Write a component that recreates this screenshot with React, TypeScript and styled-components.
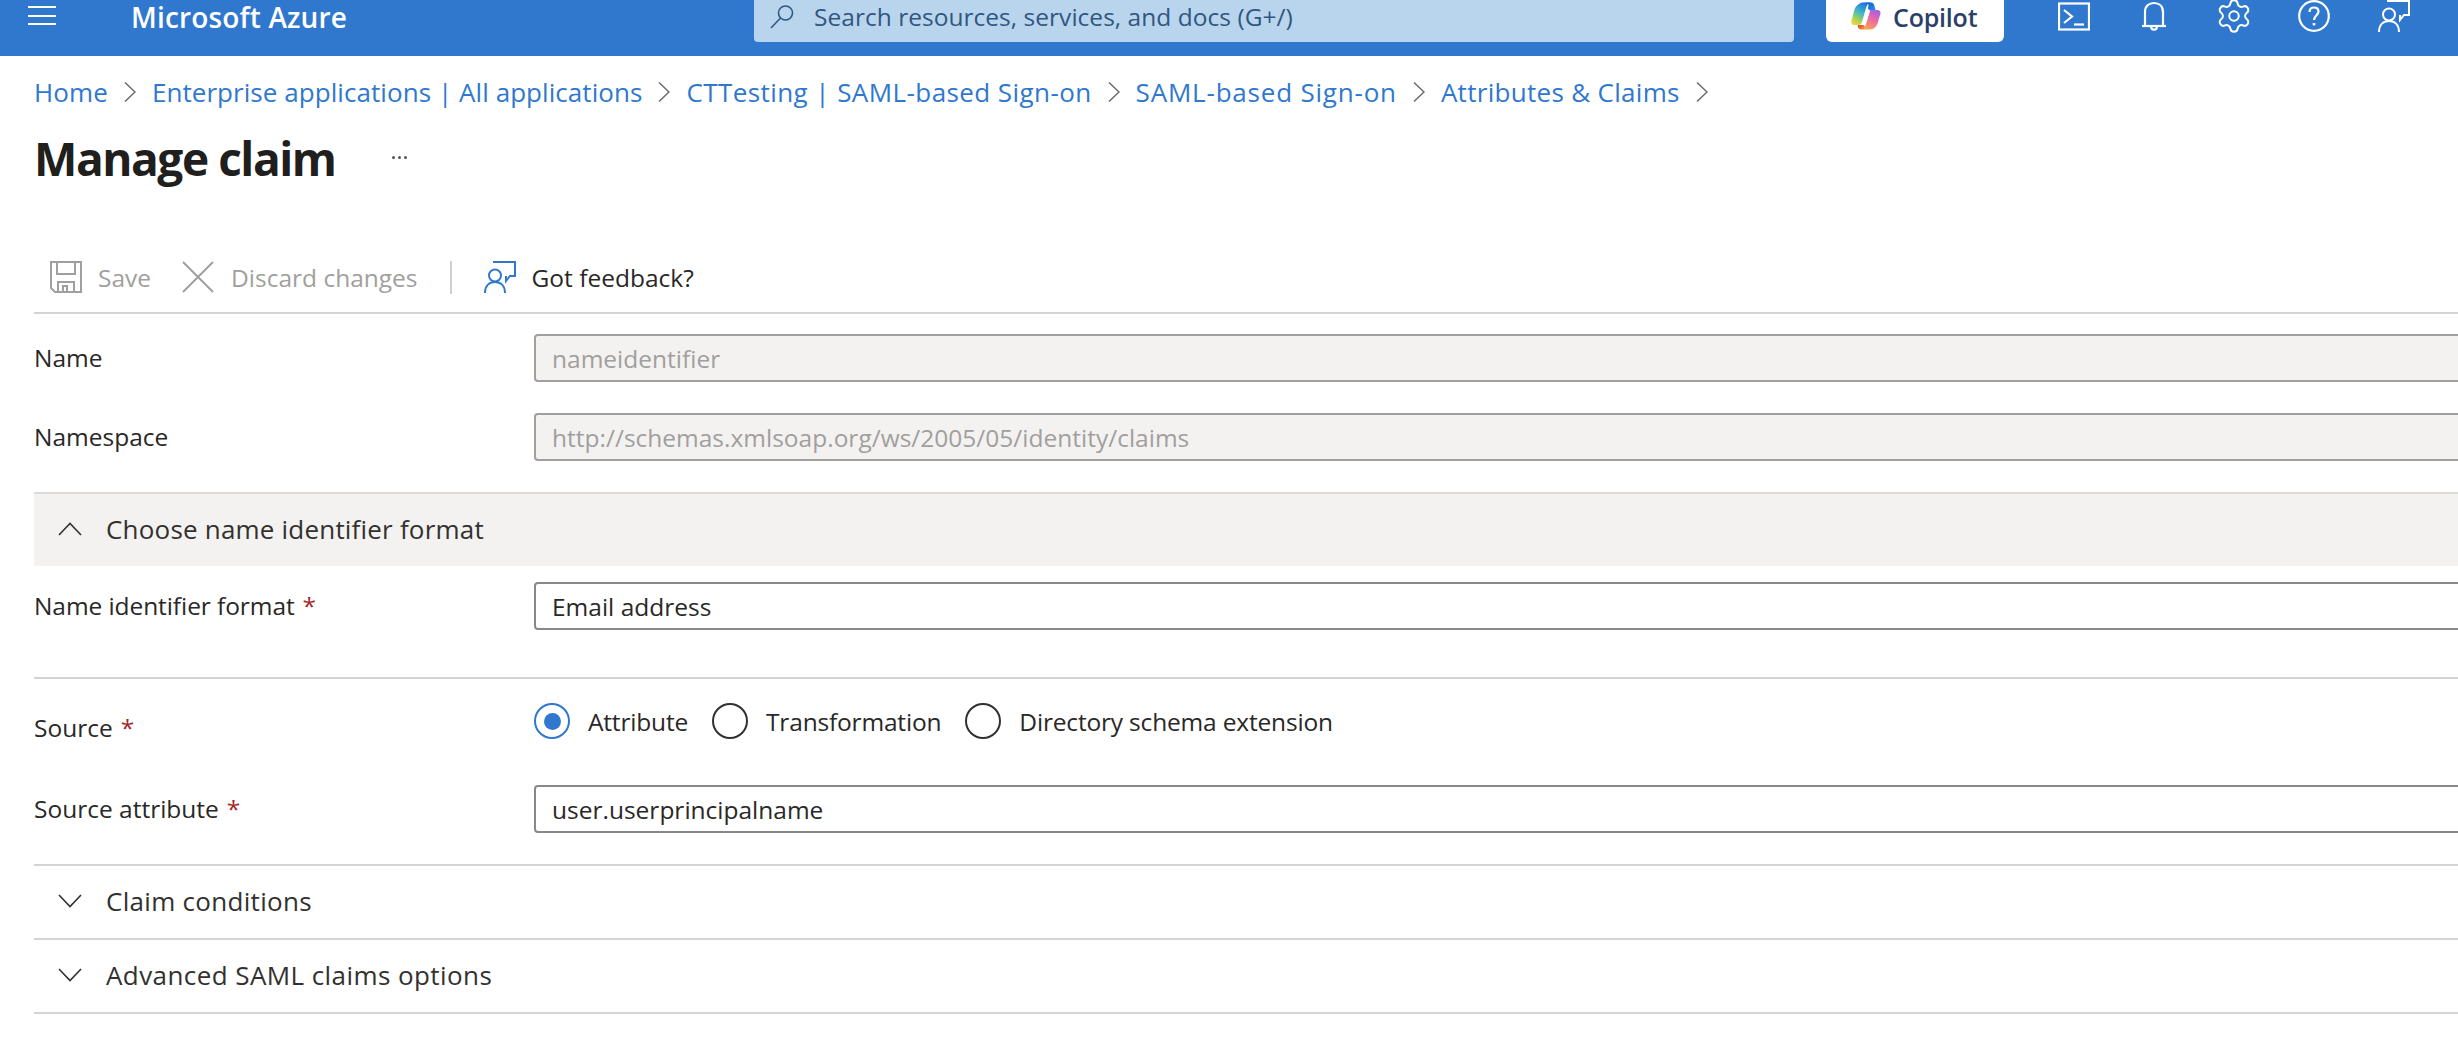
import React from 'react';
import styled, { createGlobalStyle } from 'styled-components';
import { Settings } from 'lucide-react';

const Global = createGlobalStyle`
  html, body { margin: 0; padding: 0; background: #fff; }
  body { font-family: "Open Sans", "Noto Sans", sans-serif; color: #292827; }
  * { box-sizing: border-box; }
`;

const Page = styled.div`
  width: 2458px;
  height: 1040px;
  overflow: hidden;
  background: #fff;
`;

const TopBar = styled.header`
  height: 56px;
  background: #2f78ce;
  display: flex;
  align-items: flex-start;
  color: #fff;
`;

const Burger = styled.div`
  width: 28px;
  margin: 6px 0 0 28px;
  display: flex;
  flex-direction: column;
  gap: 6.5px;
  span { display: block; height: 2px; background: #fff; }
`;

const Brand = styled.div`
  width: 623px;
  margin-left: 75px;
  font-size: 28px;
  line-height: 34px;
  font-weight: 600;
  letter-spacing: 0.15px;
`;

const SearchBox = styled.div`
  width: 1040px;
  height: 42px;
  background: #b9d5ee;
  border-radius: 0 0 4px 4px;
  display: flex;
  align-items: flex-start;
  padding-left: 16px;
  svg { margin-top: 5px; flex: none; }
  span {
    margin-left: 20px;
    color: #31577f;
    font-size: 24.5px;
    line-height: 33px;
    letter-spacing: 0.03px;
  }
`;

const CopilotButton = styled.div`
  width: 178px;
  height: 42px;
  margin-left: 32px;
  background: #fff;
  border-radius: 0 0 6px 6px;
  display: flex;
  align-items: flex-start;
  padding: 2px 0 0 25px;
  gap: 12px;
  span {
    color: #2b3f6b;
    font-size: 25px;
    line-height: 30px;
    font-weight: 600;
    letter-spacing: -0.2px;
  }
`;

const TopIcons = styled.div`
  display: flex;
  margin-left: 30px;
`;

const TopIcon = styled.div`
  width: 80px;
  height: 32px;
  display: flex;
  justify-content: center;
`;

const GearIcon = styled(Settings)`
  margin-top: -3px;
  flex: none;
`;

const Main = styled.main`
  padding-left: 34px;
`;

const Crumbs = styled.nav`
  height: 40px;
  margin-top: 16px;
  display: flex;
  align-items: center;
  gap: 16px;
  font-size: 26px;
  color: #2f78ce;
`;

const CrumbLink = styled.span<{ $track?: number }>`
  white-space: nowrap;
  letter-spacing: ${p => p.$track ?? 0}px;
`;

const TitleRow = styled.div`
  height: 95px;
  padding-bottom: 4px;
  display: flex;
  align-items: center;
`;

const Title = styled.h1`
  margin: 0;
  font-size: 46px;
  font-weight: 700;
  letter-spacing: -1.45px;
  color: #201f1e;
`;

const More = styled.div`
  margin-left: 56px;
  display: flex;
  gap: 3px;
  span { width: 3px; height: 3px; border-radius: 50%; background: #555; }
`;

const Toolbar = styled.div`
  height: 70px;
  margin-top: 37px;
  padding: 0 0 2px 16px;
  border-bottom: 2px solid #d6d4d2;
  display: flex;
  align-items: center;
`;

const ToolButton = styled.div<{ $disabled?: boolean; $gap: number }>`
  display: flex;
  align-items: center;
  gap: ${p => p.$gap}px;
  font-size: 24.5px;
  color: ${p => (p.$disabled ? '#a19f9d' : '#292827')};
  svg { flex: none; }
`;

const ToolSeparator = styled.div`
  width: 2px;
  height: 33px;
  background: #d2d0ce;
  margin: 0 32px;
`;

const ToolSpacer = styled.div`
  width: 31px;
`;

const Field = styled.div<{ $top: number; $radio?: boolean }>`
  display: grid;
  grid-template-columns: 500px 1fr;
  align-items: ${p => (p.$radio ? 'start' : 'center')};
  height: ${p => (p.$radio ? '36px' : 'auto')};
  margin-top: ${p => p.$top}px;
`;

const FieldLabel = styled.div<{ $shift?: number; $track?: number }>`
  font-size: 24.5px;
  letter-spacing: ${p => p.$track ?? 0}px;
  line-height: 36px;
  color: #292827;
  padding-top: ${p => p.$shift ?? 0}px;
`;

const Required = styled.span`
  color: #a4262c;
  margin-left: 8px;
`;

const InputBox = styled.div<{ $disabled?: boolean }>`
  height: 48px;
  margin-right: -12px;
  padding-left: 16px;
  display: flex;
  align-items: center;
  font-size: 24.5px;
  border: 2px solid ${p => (p.$disabled ? '#a19f9d' : '#8a8886')};
  border-radius: 4px;
  background: ${p => (p.$disabled ? '#f3f2f1' : '#fff')};
  color: ${p => (p.$disabled ? '#a19f9d' : '#292827')};
`;

const SectionHead = styled.div<{ $open?: boolean; $track?: number }>`
  height: 74px;
  display: flex;
  align-items: center;
  gap: 24px;
  padding: 0 0 2px 24px;
  font-size: 26px;
  letter-spacing: ${p => p.$track ?? 0.2}px;
  color: #323130;
  background: ${p => (p.$open ? '#f3f2f1' : '#fff')};
  border-top: ${p => (p.$open ? '2px solid #dddbd9' : 'none')};
  border-bottom: ${p => (p.$open ? 'none' : '2px solid #d6d4d2')};
  margin-top: ${p => (p.$open ? 31 : 0)}px;
`;

const Divider = styled.div<{ $top: number }>`
  height: 2px;
  background: #d6d4d2;
  margin-top: ${p => p.$top}px;
`;

const Radios = styled.div`
  display: flex;
  gap: 24px;
`;

const RadioItem = styled.div`
  display: flex;
  align-items: center;
  gap: 18px;
  font-size: 24.5px;
  letter-spacing: -0.18px;
  color: #292827;
`;

const RadioMark = styled.span<{ $on?: boolean }>`
  width: 36px;
  height: 36px;
  flex: none;
  border-radius: 50%;
  border: 2px solid ${p => (p.$on ? '#2f78ce' : '#323130')};
  display: flex;
  align-items: center;
  justify-content: center;
  &::after {
    content: '';
    display: ${p => (p.$on ? 'block' : 'none')};
    width: 17px;
    height: 17px;
    border-radius: 50%;
    background: #2f78ce;
  }
`;

const Chevron = ({ dir }: { dir: 'up' | 'down' | 'right' }) => {
  if (dir === 'right') {
    return (
      <svg width="12" height="22" viewBox="0 0 12 22" fill="none" stroke="#6b6a68" strokeWidth="1.5" style={{ flex: 'none' }}>
        <path d="M1 1.5 L11 11 L1 20.5" />
      </svg>
    );
  }
  return (
    <svg width="24" height="14" viewBox="0 0 24 14" fill="none" stroke="#323130" strokeWidth="1.6" style={{ flex: 'none' }}>
      <path d={dir === 'up' ? 'M1 13 L12 1.5 L23 13' : 'M1 1 L12 12.5 L23 1'} />
    </svg>
  );
};

const FeedbackIcon = ({ color }: { color: string }) => (
  <svg width="32" height="32" viewBox="0 0 32 32" fill="none" stroke={color} strokeWidth="2">
    <circle cx="11" cy="14.5" r="6" />
    <path d="M1 32 C1 25 5 21 11 21 C17 21 21 25 21 32" />
    <path d="M9 1 H31 V15 H26 L22 20 V15" />
  </svg>
);

const SaveIcon = () => (
  <svg width="32" height="32" viewBox="0 0 32 32" fill="none" stroke="#a19f9d" strokeWidth="2">
    <path d="M1 1 H31 V31 H5 L1 27 Z" />
    <path d="M7 1 V13 H25 V1" />
    <path d="M8 31 V21 H24 V31" />
    <path d="M13 31 V25 H17 V31" />
  </svg>
);

const CloseIcon = () => (
  <svg width="32" height="32" viewBox="0 0 32 32" fill="none" stroke="#a19f9d" strokeWidth="2">
    <path d="M1 1 L31 31 M31 1 L1 31" />
  </svg>
);

const CopilotLogo = () => (
  <svg width="30" height="28" viewBox="0 0 30 28" style={{ flex: 'none' }}>
    <defs>
      <linearGradient id="cpL" x1="0.7" y1="0" x2="0.2" y2="1">
        <stop offset="0" stopColor="#1f6fe0" />
        <stop offset="0.45" stopColor="#3fb8c8" />
        <stop offset="0.75" stopColor="#a4d15a" />
        <stop offset="1" stopColor="#f3d23c" />
      </linearGradient>
      <linearGradient id="cpR" x1="0.8" y1="0" x2="0.3" y2="1">
        <stop offset="0" stopColor="#a45fe8" />
        <stop offset="0.5" stopColor="#ee6a9e" />
        <stop offset="1" stopColor="#f9a94a" />
      </linearGradient>
      <linearGradient id="cpT" x1="0" y1="0" x2="1" y2="1">
        <stop offset="0" stopColor="#0f5bd0" />
        <stop offset="1" stopColor="#2a8be8" />
      </linearGradient>
      <linearGradient id="cpB" x1="0" y1="0" x2="1" y2="1">
        <stop offset="0" stopColor="#d9452e" />
        <stop offset="1" stopColor="#f49a3a" />
      </linearGradient>
    </defs>
    <path d="M8 2 C9 0.8 11 0.5 13 0.5 H20 C17 1 16 3 15 6 L11 20 C10.4 22 9 23 7 23 H3 C1 23 0 21 0.4 19 L3 9 C4 5 6 3 8 2 Z" fill="url(#cpL)" />
    <path d="M13 0.5 H20 C22 0.5 23 2 23.5 4 L24.5 8 H19 C17.6 8 17 7 17 6 L17.5 3 C17.5 2 16 1 13 0.5 Z" fill="url(#cpT)" />
    <path d="M19 8 H26 C28.5 8 30 9.5 29.4 12 L27 20 C26 24 23 27.5 19 27.5 H10 C13 27 14.3 25 15 22 L18.4 10 C18.7 9 18.8 8.5 19 8 Z" fill="url(#cpR)" />
    <path d="M7 23 H12 C13 23 13.7 24 14 25 C13.4 26.6 12 27.5 10 27.5 C8 27.5 7 26 6.6 24.6 Z" fill="url(#cpB)" />
    <path d="M19 8.6 C18.2 9 18 10 17.6 11 L15 20 C14.8 21 14.3 21.6 13.6 21.9 C15.4 21 16 19 16.4 17.6 L18.6 10.2 Z" fill="#fff" />
  </svg>
);

const required = <Required>*</Required>;

export default function App() {
  return (
    <Page>
      <Global />
      <TopBar>
        <Burger>
          <span />
          <span />
          <span />
        </Burger>
        <Brand>Microsoft Azure</Brand>
        <SearchBox>
          <svg width="24" height="24" viewBox="0 0 24 24" fill="none" stroke="#31577f" strokeWidth="1.6">
            <circle cx="15.5" cy="8" r="7" />
            <path d="M10.5 13 L1 23" />
          </svg>
          <span>Search resources, services, and docs (G+/)</span>
        </SearchBox>
        <CopilotButton>
          <CopilotLogo />
          <span>Copilot</span>
        </CopilotButton>
        <TopIcons>
          <TopIcon>
            <svg width="32" height="32" viewBox="0 0 32 32" fill="none" stroke="#fff" strokeWidth="2.2">
              <rect x="1" y="3.5" width="30" height="26" />
              <path d="M6 10 L14 16.5 L6 23" />
              <path d="M16 24.5 H26" />
            </svg>
          </TopIcon>
          <TopIcon>
            <svg width="32" height="32" viewBox="0 0 32 32" fill="none" stroke="#fff" strokeWidth="2.2">
              <path d="M4 26 H28" />
              <path d="M7 26 V12 C7 6 11 3 16 3 C21 3 25 6 25 12 V26" />
              <path d="M13 26 C13 31 19 31 19 26" />
            </svg>
          </TopIcon>
          <TopIcon>
            <GearIcon size={38} color="#fff" strokeWidth={1.25} />
          </TopIcon>
          <TopIcon>
            <svg width="32" height="32" viewBox="0 0 32 32" fill="none" stroke="#fff" strokeWidth="2.2">
              <circle cx="16" cy="16" r="14.8" />
              <path d="M11.5 12 C11.5 9 13.5 7.5 16 7.5 C18.5 7.5 20.5 9 20.5 11.5 C20.5 15 16 15.5 16 20" />
              <path d="M16 23 V25.4" strokeWidth="2.6" />
            </svg>
          </TopIcon>
          <TopIcon>
            <FeedbackIcon color="#fff" />
          </TopIcon>
        </TopIcons>
      </TopBar>
      <Main>
        <Crumbs>
          <CrumbLink $track={0.1}>Home</CrumbLink>
          <Chevron dir="right" />
          <CrumbLink $track={0.06}>Enterprise applications | All applications</CrumbLink>
          <Chevron dir="right" />
          <CrumbLink $track={0.42}>CTTesting | SAML-based Sign-on</CrumbLink>
          <Chevron dir="right" />
          <CrumbLink $track={0.8}>SAML-based Sign-on</CrumbLink>
          <Chevron dir="right" />
          <CrumbLink $track={0.3}>Attributes &amp; Claims</CrumbLink>
          <Chevron dir="right" />
        </Crumbs>
        <TitleRow>
          <Title>Manage claim</Title>
          <More>
            <span />
            <span />
            <span />
          </More>
        </TitleRow>
        <Toolbar>
          <ToolButton $disabled $gap={16}>
            <SaveIcon />
            Save
          </ToolButton>
          <ToolSpacer />
          <ToolButton $disabled $gap={17}>
            <CloseIcon />
            Discard changes
          </ToolButton>
          <ToolSeparator />
          <ToolButton $gap={16}>
            <FeedbackIcon color="#2f78ce" />
            Got feedback?
          </ToolButton>
        </Toolbar>
        <Field $top={20}>
          <FieldLabel>Name</FieldLabel>
          <InputBox $disabled>nameidentifier</InputBox>
        </Field>
        <Field $top={31}>
          <FieldLabel>Namespace</FieldLabel>
          <InputBox $disabled>http://schemas.xmlsoap.org/ws/2005/05/identity/claims</InputBox>
        </Field>
        <SectionHead $open>
          <Chevron dir="up" />
          Choose name identifier format
        </SectionHead>
        <Field $top={16}>
          <FieldLabel $track={-0.08}>Name identifier format{required}</FieldLabel>
          <InputBox>Email address</InputBox>
        </Field>
        <Divider $top={47} />
        <Field $top={24} $radio>
          <FieldLabel $shift={7}>Source{required}</FieldLabel>
          <Radios>
            <RadioItem>
              <RadioMark $on />
              Attribute
            </RadioItem>
            <RadioItem>
              <RadioMark />
              Transformation
            </RadioItem>
            <RadioItem>
              <RadioMark />
              Directory schema extension
            </RadioItem>
          </Radios>
        </Field>
        <Field $top={46}>
          <FieldLabel>Source attribute{required}</FieldLabel>
          <InputBox>user.userprincipalname</InputBox>
        </Field>
        <Divider $top={31} />
        <SectionHead $track={0.3}>
          <Chevron dir="down" />
          Claim conditions
        </SectionHead>
        <SectionHead $track={0.42}>
          <Chevron dir="down" />
          Advanced SAML claims options
        </SectionHead>
      </Main>
    </Page>
  );
}
